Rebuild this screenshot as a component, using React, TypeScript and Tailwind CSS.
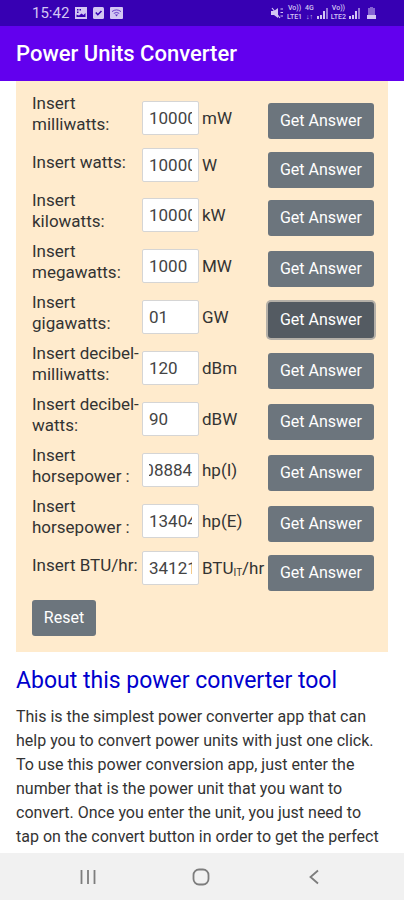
import { useState } from "react";

type Unit = {
  id: string;
  label: string;
  symbol: React.ReactNode;
  value: string;
  short?: boolean;
  active?: boolean;
  scrollEnd?: boolean;
};

const units: Unit[] = [
  { id: "mw", label: "Insert milliwatts:", symbol: "mW", value: "1000000000000" },
  { id: "w", label: "Insert watts:", symbol: "W", value: "1000000000", short: true },
  { id: "kw", label: "Insert kilowatts:", symbol: "kW", value: "1000000" },
  { id: "megaw", label: "Insert megawatts:", symbol: "MW", value: "1000" },
  { id: "gw", label: "Insert gigawatts:", symbol: "GW", value: "01", active: true },
  { id: "dbm", label: "Insert decibel-milliwatts:", symbol: "dBm", value: "120" },
  { id: "dbw", label: "Insert decibel-watts:", symbol: "dBW", value: "90" },
  { id: "hpi", label: "Insert horsepower :", symbol: "hp(I)", value: "1341022.08884", scrollEnd: true },
  { id: "hpe", label: "Insert horsepower :", symbol: "hp(E)", value: "1340482.57" },
  {
    id: "btu",
    label: "Insert BTU/hr:",
    symbol: (
      <>
        BTU<sub className="text-[10px]">IT</sub>/hr
      </>
    ),
    value: "3412141.633",
    short: true,
  },
];

function StatusBar() {
  return (
    <div className="h-[26px] bg-[#3700b3] pl-8 pr-7 flex items-center justify-between text-[#d3c6f3]">
      <div className="flex items-center gap-1.5">
        <span className="text-[15px] leading-5">15:42</span>
        <svg width="12" height="12" viewBox="0 0 12 12">
          <path fill="currentColor" fillRule="evenodd" d="M0 0h12v12H0zM1.500 7.500v2.500h9V6L8.500 8 6.500 6.500 4 8.500zM2 2h1.500v1.500H2zM4.500 2H6v1.500H4.500zM2 4.500h1.500V6H2z" />
        </svg>
        <svg width="11" height="12" viewBox="0 0 11 12">
          <rect width="11" height="12" rx="1.500" fill="currentColor" />
          <path d="M2.800 5.500l2 2.200L8.500 4" fill="none" stroke="#3700b3" strokeWidth="1.600" />
        </svg>
        <svg width="13" height="12" viewBox="0 0 13 12">
          <rect width="13" height="12" rx="1" fill="currentColor" />
          <path d="M2 4.600Q6.500 1.200 11 4.600M3.800 6.400Q6.500 4.400 9.200 6.400" fill="none" stroke="#3700b3" strokeWidth="1" opacity="0.700" />
          <path d="M5 7.400h3L6.500 9.600z" fill="#3700b3" opacity="0.800" />
        </svg>
      </div>
      <div className="flex items-center gap-[3px]">
        <svg width="13" height="12" viewBox="0 0 13 12">
          <path fill="currentColor" d="M0 4h3l4-3v10L3 8H0z" />
          <path d="M1 1l8 10M9.500 2H12M9.500 5.500H12M9.500 9H12" stroke="currentColor" strokeWidth="1.200" />
        </svg>
        <SimLabel top="Vo))" bottom="LTE1" />
        <SimLabel top="4G" bottom="↓↑" />
        <Signal />
        <SimLabel top="Vo))" bottom="LTE2" />
        <Signal />
        <svg width="9" height="12" viewBox="0 0 9 12" className="ml-1">
          <path fill="currentColor" opacity="0.500" d="M3 0h3v1h2v7H1V1h2z" />
          <path fill="currentColor" d="M0 8h9v4H0z" />
        </svg>
      </div>
    </div>
  );
}

function SimLabel({ top, bottom }: { top: string; bottom: string }) {
  return (
    <span className="flex flex-col items-center text-[7px] leading-[9px] font-medium">
      <span>{top}</span>
      <span>{bottom}</span>
    </span>
  );
}

function Signal() {
  return (
    <svg width="11" height="12" viewBox="0 0 11 12">
      <path fill="currentColor" d="M0 9h2v3H0zM3 8h2v4H3zM6 4h2v8H6z" />
      <path fill="currentColor" opacity="0.600" d="M9 1h2v11H9z" />
    </svg>
  );
}

function UnitRow({ unit }: { unit: Unit }) {
  const [value, setValue] = useState(unit.value);

  const showEnd = (el: HTMLInputElement | null) => {
    if (el && unit.scrollEnd) el.scrollLeft = el.scrollWidth;
  };

  return (
    <div className={`flex items-start ${unit.short ? "pb-0.5" : "pb-[5px]"}`}>
      <label
        htmlFor={unit.id}
        className={`w-[110px] shrink-0 text-[17px] leading-[21px] ${unit.short ? "pt-2" : ""}`}
      >
        {unit.label}
      </label>
      <div className={`flex flex-1 items-center ${unit.short ? "pt-1" : "pt-2"}`}>
        <input
          id={unit.id}
          ref={showEnd}
          type="text"
          inputMode="decimal"
          value={value}
          onChange={(e) => setValue(e.target.value)}
          className="w-[57px] h-[34px] shrink-0 px-1.5 bg-white border border-[#d5d5d5] rounded-xs text-[17px] text-[#444] outline-none"
        />
        <span className="w-0 pl-[3px] text-[17px] leading-[21px] whitespace-nowrap">{unit.symbol}</span>
      </div>
      <div className={unit.short ? "pt-2" : "pt-2.5"}>
        <button
          type="button"
          className={`block w-[106px] h-9 rounded-[3px] text-white ${
            unit.active ? "bg-[#545b62] ring-2 ring-[#b5b0a8]" : "bg-[#6c757d]"
          }`}
        >
          Get Answer
        </button>
      </div>
    </div>
  );
}

export default function App() {
  return (
    <div className="min-h-screen flex flex-col bg-white font-[Roboto,sans-serif] text-base text-[#333]">
      <StatusBar />
      <header className="h-[55px] bg-[#6200ee] px-4 flex items-center">
        <h1 className="text-[22px] leading-7 font-medium text-white">Power Units Converter</h1>
      </header>

      <main className="flex-1">
        <form className="mx-4 bg-[#ffebcd] pl-4 pr-3.5 pt-3 pb-4" onSubmit={(e) => e.preventDefault()}>
          {units.map((unit) => (
            <UnitRow key={unit.id} unit={unit} />
          ))}
          <button type="reset" className="block mt-[7px] w-16 h-9 rounded-[3px] bg-[#6c757d] text-white">
            Reset
          </button>
        </form>

        <section className="pl-4 pr-5 pt-[13px]">
          <h2 className="text-[23px] leading-8 text-[#0000cd]">About this power converter tool</h2>
          <p className="pt-2 leading-6">
            This is the simplest power converter app that can help you to convert power units with just one click. To
            use this power conversion app, just enter the number that is the power unit that you want to convert. Once
            you enter the unit, you just need to tap on the convert button in order to get the perfect
          </p>
        </section>
      </main>

      <nav className="h-[47px] bg-[#f1f1f1] pl-8 pr-[34px] grid grid-cols-3 items-center justify-items-center text-[#7d7d7d]">
        <button type="button" aria-label="Recent apps">
          <svg width="16" height="16" viewBox="0 0 16 16">
            <path d="M1.500 1v14M8 1v14M14.500 1v14" stroke="currentColor" strokeWidth="1.800" />
          </svg>
        </button>
        <button type="button" aria-label="Home">
          <svg width="18" height="18" viewBox="0 0 18 18">
            <rect x="1.500" y="1.500" width="15" height="15" rx="5.500" fill="none" stroke="currentColor" strokeWidth="1.800" />
          </svg>
        </button>
        <button type="button" aria-label="Back">
          <svg width="10" height="16" viewBox="0 0 10 16">
            <path d="M9 1.500L1.500 8L9 14.500" fill="none" stroke="currentColor" strokeWidth="1.800" />
          </svg>
        </button>
      </nav>
    </div>
  );
}
